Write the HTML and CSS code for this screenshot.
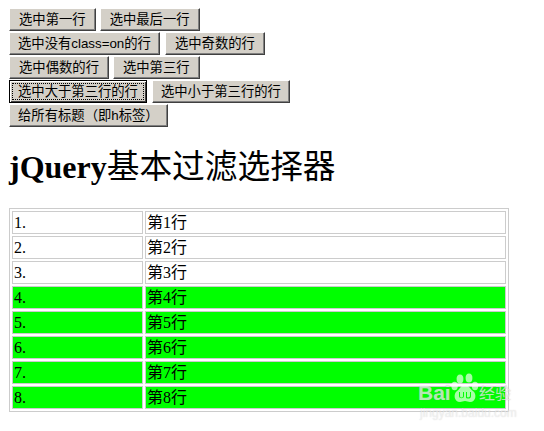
FILE: index.html
```html
<!DOCTYPE html>
<html>
	<head>
		<meta charset="UTF-8">
		<title>jQuery基本过滤选择器</title>
		<link rel="stylesheet" href="styles.css">
	</head>
	<body>
		<!--buttons-->
		<div class="btn-row gap-4">
			<button class="btn">选中第一行</button>
			<button class="btn">选中最后一行</button>
		</div>
		<div class="btn-row gap-5">
			<button class="btn btn-tight">选中没有class=on的行</button>
			<button class="btn">选中奇数的行</button>
		</div>
		<div class="btn-row gap-4">
			<button class="btn">选中偶数的行</button>
			<button class="btn">选中第三行</button>
		</div>
		<div class="btn-row gap-5">
			<button class="btn btn-focus"><span class="dots">选中大于第三行的行</span></button>
			<button class="btn btn-tight">选中小于第三行的行</button>
		</div>
		<div class="btn-row">
			<button class="btn btn-tight">给所有标题（即h标签）</button>
		</div>

		<h1 class="title">jQuery<span class="title-cn">基本过滤选择器</span></h1>

		<!--table-->
		<table class="list">
			<tr><td class="num">1.</td><td>第1行</td></tr>
			<tr><td class="num">2.</td><td>第2行</td></tr>
			<tr><td class="num">3.</td><td>第3行</td></tr>
			<tr class="on"><td class="num">4.</td><td>第4行</td></tr>
			<tr class="on"><td class="num">5.</td><td>第5行</td></tr>
			<tr class="on"><td class="num">6.</td><td>第6行</td></tr>
			<tr class="on"><td class="num">7.</td><td>第7行</td></tr>
			<tr class="on"><td class="num">8.</td><td>第8行</td></tr>
		</table>

		<!--watermark-->
		<div class="mark">
			<div class="mark-top">
				<span class="mark-bai">Bai</span>
				<svg class="mark-paw" width="28" height="32" viewBox="0 0 28 32">
					<ellipse cx="9" cy="7" rx="3.4" ry="4.6"/>
					<ellipse cx="18" cy="6" rx="3.4" ry="4.6"/>
					<ellipse cx="3.6" cy="14" rx="3.2" ry="4.2"/>
					<ellipse cx="24" cy="14" rx="3.2" ry="4.2"/>
					<path fill-rule="evenodd" d="M14 13c4 0 5 4 8 6 4 3 3 11-3 11-2 0-3-1-5-1s-3 1-5 1c-6 0-7-8-3-11 3-2 4-6 8-6zM8 20v4c0 3 5 3 5 0v-4h-1v4c0 2-3 2-3 0v-4zM15 20v6c2 1 5 1 5-2v-4h-1v4c0 1-2 2-3 1v-5z"/>
				</svg>
				<span class="mark-cn">经验</span>
			</div>
			<div class="mark-url">jingyan.baidu.com</div>
		</div>
	</body>
</html>
```

FILE: styles.css
```css
html,body{
	margin: 0px;
	padding: 0px;
}
body{
	padding: 8px 0 0 9px;
	position: relative;
	height: 423px;
	overflow: hidden;
	background-color: #fff;
	font-family: "Liberation Serif", "Noto Sans CJK SC", serif;
}
/*buttons start*/
.btn-row{
	display: flex;
	height: 23px;
	margin-bottom: 1px;
}
.gap-4{
	gap: 4px;
}
.gap-5{
	gap: 5px;
}
.btn{
	margin: 0;
	padding: 0 9px;
	height: 23px;
	font-family: "Liberation Sans", "Noto Sans CJK SC", sans-serif;
	font-size: 13.33px;
	line-height: 19px;
	color: #000;
	background-color: #d4d0c8;
	border: 1px solid;
	border-color: #fff #404040 #404040 #fff;
	box-shadow: inset -1px -1px 0 #808080;
	white-space: nowrap;
}
.btn-tight{
	padding: 0 8px;
}
.btn-focus{
	padding: 0 2px;
	border: 1px solid #000;
	box-shadow: inset 1px 1px 0 #fff, inset -1px -1px 0 #404040;
}
.dots{
	display: block;
	padding: 0 5px;
	line-height: 15px;
	border: 1px dotted #000;
}
/*buttons end*/

.title{
	margin: 22px 0 22px 0;
	font-size: 32px;
	line-height: 37px;
	font-weight: bold;
	color: #000;
}
.title-cn{
	font-weight: normal;
	font-size: 32.7px;
}

/*table start*/
.list{
	width: 500px;
	table-layout: fixed;
	border: 1px solid #ccc;
	border-spacing: 2px;
	font-size: 16px;
}
.list td{
	padding: 0 1px;
	height: 21px;
	line-height: 19px;
	border: 1px solid #ccc;
}
.list .num{
	width: 127px;
}
.list .on td{
	background-color: #0f0;
}
/*table end*/

/*watermark*/
.mark{
	position: absolute;
	left: 418px;
	top: 372px;
	width: 100px;
	color: rgba(255, 255, 255, 0.65);
	text-shadow: 0 0 1px rgba(120, 120, 120, 0.5);
}
.mark-top{
	display: flex;
	align-items: flex-end;
	height: 32px;
}
.mark-bai{
	width: 33px;
	font-family: "Liberation Sans", sans-serif;
	font-size: 21px;
	font-weight: bold;
	line-height: 22px;
}
.mark-paw{
	fill: rgba(255, 255, 255, 0.65);
}
.mark-cn{
	font-family: "Noto Sans CJK SC", sans-serif;
	font-size: 16px;
	line-height: 24px;
}
.mark-url{
	margin: 3px 0 0 2px;
	font-family: "Liberation Sans", sans-serif;
	font-size: 12px;
	line-height: 13px;
	color: rgba(255, 255, 255, 0.55);
	text-shadow: 0 0 1px rgba(120, 120, 120, 0.3);
	white-space: nowrap;
}
```
